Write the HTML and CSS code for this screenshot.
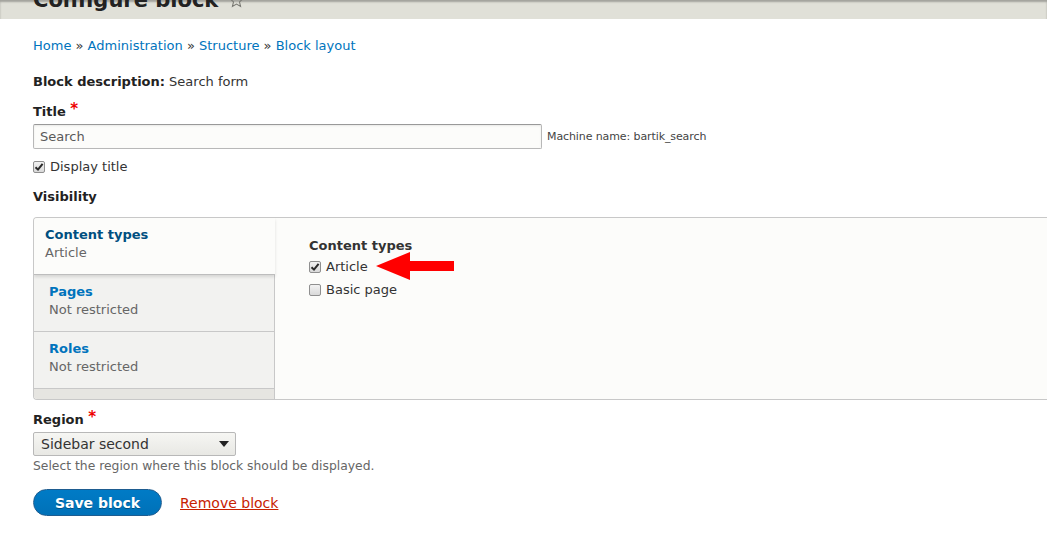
FILE: index.html
```html
<!DOCTYPE html>
<html lang="en">
<head>
<meta charset="utf-8">
<title>Configure block</title>
<link rel="stylesheet" href="styles.css">
</head>
<body>
<header class="page-header">
  <h1 class="page-title">Configure block
    <svg class="shortcut" width="15" height="15" viewBox="0 0 14 14"><path d="M7 1 L8.8 5 L13 5.4 L9.8 8.3 L10.8 12.6 L7 10.4 L3.2 12.6 L4.2 8.3 L1 5.4 L5.2 5 Z" fill="none" stroke="#7a7a74" stroke-width="1"/></svg>
  </h1>
</header>

<main class="content">
  <nav class="breadcrumb">
    <a href="#">Home</a> » <a href="#">Administration</a> » <a href="#">Structure</a> » <a href="#">Block layout</a>
  </nav>

  <div class="item"><strong>Block description:</strong> Search form</div>

  <div class="field">
    <label class="label">Title <span class="req">*</span></label>
    <div class="row">
      <div class="text-input">Search</div>
      <span class="machine">Machine name: bartik_search</span>
    </div>
  </div>

  <label class="check check-display">
    <span class="box"><svg width="10" height="10" viewBox="0 0 10 10"><path d="M1.5 5.2 L4 7.6 L8.6 1.8" fill="none" stroke="#2a2a2a" stroke-width="2"/></svg></span>
    Display title
  </label>

  <h4 class="section">Visibility</h4>

  <div class="vtabs">
    <ul class="vtabs-menu">
      <li class="tab selected"><a class="tab-title" href="#">Content types</a><span class="tab-summary">Article</span></li>
      <li class="tab"><a class="tab-title" href="#">Pages</a><span class="tab-summary">Not restricted</span></li>
      <li class="tab"><a class="tab-title" href="#">Roles</a><span class="tab-summary">Not restricted</span></li>
    </ul>
    <div class="vtabs-pane">
      <div class="pane-label">Content types</div>
      <div class="pane-row">
        <label class="check">
          <span class="box"><svg width="10" height="10" viewBox="0 0 10 10"><path d="M1.5 5.2 L4 7.6 L8.6 1.8" fill="none" stroke="#2a2a2a" stroke-width="2"/></svg></span>
          Article
        </label>
        <svg class="pointer" width="80" height="30" viewBox="0 0 80 30"><polygon points="0,14 34,0 34,9 78,9 78,19 34,19 34,28" fill="#f00"/></svg>
      </div>
      <label class="check">
        <span class="box"></span>
        Basic page
      </label>
    </div>
  </div>

  <div class="field region">
    <label class="label">Region <span class="req">*</span></label>
    <div class="select">Sidebar second<span class="caret"></span></div>
    <div class="description">Select the region where this block should be displayed.</div>
  </div>

  <div class="actions">
    <button class="button-primary" type="button">Save block</button>
    <a class="remove" href="#">Remove block</a>
  </div>
</main>
</body>
</html>
```

FILE: styles.css
```css
html, body {
  margin: 0;
  padding: 0;
  background: #fff;
}

body {
  font-family: "DejaVu Sans", Verdana, sans-serif;
  font-size: 13px;
  line-height: 18px;
  color: #333;
}

a {
  color: #0074bd;
  text-decoration: none;
}

/* Page header band (scrolled, title mostly above the fold) */
.page-header {
  height: 19px;
  background: #e0e0d8;
  box-shadow: inset 0 2px 2px rgba(0, 0, 0, 0.28);
  overflow: hidden;
  padding-left: 33px;
}

.page-title {
  margin: -14px 0 0;
  font-size: 21px;
  line-height: 28px;
  font-weight: bold;
  color: #222;
  display: flex;
  align-items: center;
  gap: 11px;
}

.shortcut {
  margin-top: 0;
}

.content {
  padding-left: 33px;
}

.breadcrumb {
  margin-top: 18px;
  color: #333;
}

.item {
  margin-top: 18px;
}

.item strong {
  color: #222;
}

.field {
  margin-top: 12px;
}

.label {
  display: block;
  font-weight: bold;
  color: #222;
}

.req {
  color: #e00;
  font-size: 15px;
  line-height: 0;
  position: relative;
  top: -2px;
}

.row {
  margin-top: 3px;
  display: flex;
  align-items: center;
  gap: 5px;
}

.text-input {
  width: 495px;
  height: 23px;
  line-height: 23px;
  padding: 0 6px;
  border: 1px solid #b8b8b8;
  border-top-color: #999;
  border-radius: 2px;
  background: #fcfcfa;
  color: #595959;
  box-shadow: inset 0 1px 2px rgba(0, 0, 0, 0.08);
}

.machine {
  font-size: 11px;
  letter-spacing: -0.1px;
  color: #444;
  margin-top: 1px;
}

/* Checkboxes */
.check {
  display: flex;
  align-items: center;
  gap: 5px;
  color: #333;
}

.check-display {
  margin-top: 9px;
}

.box {
  width: 10px;
  height: 10px;
  border: 1px solid #8f8f8f;
  border-radius: 2px;
  background: linear-gradient(#f2f2f2, #d9d9d9);
  display: flex;
  align-items: center;
  justify-content: center;
  flex: none;
}

.section {
  margin: 12px 0 0;
  font-size: 13px;
  line-height: 18px;
  font-weight: bold;
  color: #222;
}

/* Vertical tabs */
.vtabs {
  margin-top: 11px;
  height: 181px;
  border: 1px solid #c8c8c8;
  border-right: none;
  border-radius: 4px 0 0 4px;
  display: flex;
  background: #fcfcfa;
  overflow: hidden;
}

.vtabs-menu {
  list-style: none;
  margin: 0;
  padding: 0;
  width: 240px;
  flex: none;
  background: #e6e5e1;
  border-right: 1px solid #c8c8c8;
}

.tab {
  height: 57px;
  padding: 8px 0 0 15px;
  box-sizing: border-box;
  background: #f2f2f0;
  border-bottom: 1px solid #c8c8c8;
  display: flex;
  flex-direction: column;
}

.tab + .tab {
  height: 57px;
  padding-top: 8px;
}

.tab.selected {
  background: #fcfcfa;
  padding-left: 11px;
  margin-right: -1px;
  border-bottom-color: #bdbdbd;
  box-shadow: 0 2px 3px rgba(0, 0, 0, 0.12);
  position: relative;
  z-index: 1;
}

.tab-title {
  font-weight: bold;
  color: #0074bd;
}

.selected .tab-title {
  color: #004f80;
}

.tab-summary {
  color: #666;
}

.vtabs-pane {
  padding: 19px 0 0 34px;
  flex: 1;
}

.pane-label {
  font-weight: bold;
  color: #333;
}

.pane-row {
  margin-top: 3px;
  height: 18px;
  display: flex;
  align-items: center;
  gap: 8px;
}

.pane-row + .check {
  margin-top: 5px;
}

.pointer {
  flex: none;
  margin: -6px 0;
}

/* Region select */
.region {
  margin-top: 11px;
}

.select {
  margin-top: 3px;
  width: 187px;
  height: 22px;
  line-height: 22px;
  padding: 0 7px;
  font-size: 14px;
  color: #333;
  border: 1px solid #b8b8b8;
  border-radius: 2px;
  background: linear-gradient(#f6f6f3, #e8e8e4);
  display: flex;
  align-items: center;
  justify-content: space-between;
}

.caret {
  width: 0;
  height: 0;
  border-left: 5px solid transparent;
  border-right: 5px solid transparent;
  border-top: 6px solid #222;
  margin-right: -1px;
}

.description {
  margin-top: 2px;
  font-size: 12.35px;
  line-height: 16px;
  color: #666;
}

/* Form actions */
.actions {
  margin-top: 15px;
  display: flex;
  align-items: center;
  gap: 18px;
}

.button-primary {
  width: 129px;
  height: 27px;
  border: 1px solid #1e5c90;
  border-radius: 20px;
  background: linear-gradient(#007bc6, #0071b8);
  color: #fff;
  font-family: "DejaVu Sans", Verdana, sans-serif;
  font-size: 14px;
  font-weight: bold;
  padding: 0;
  text-shadow: 0 1px 0 rgba(0, 0, 0, 0.3);
}

.remove {
  color: #c72100;
  text-decoration: underline;
  font-size: 14px;
}
```
